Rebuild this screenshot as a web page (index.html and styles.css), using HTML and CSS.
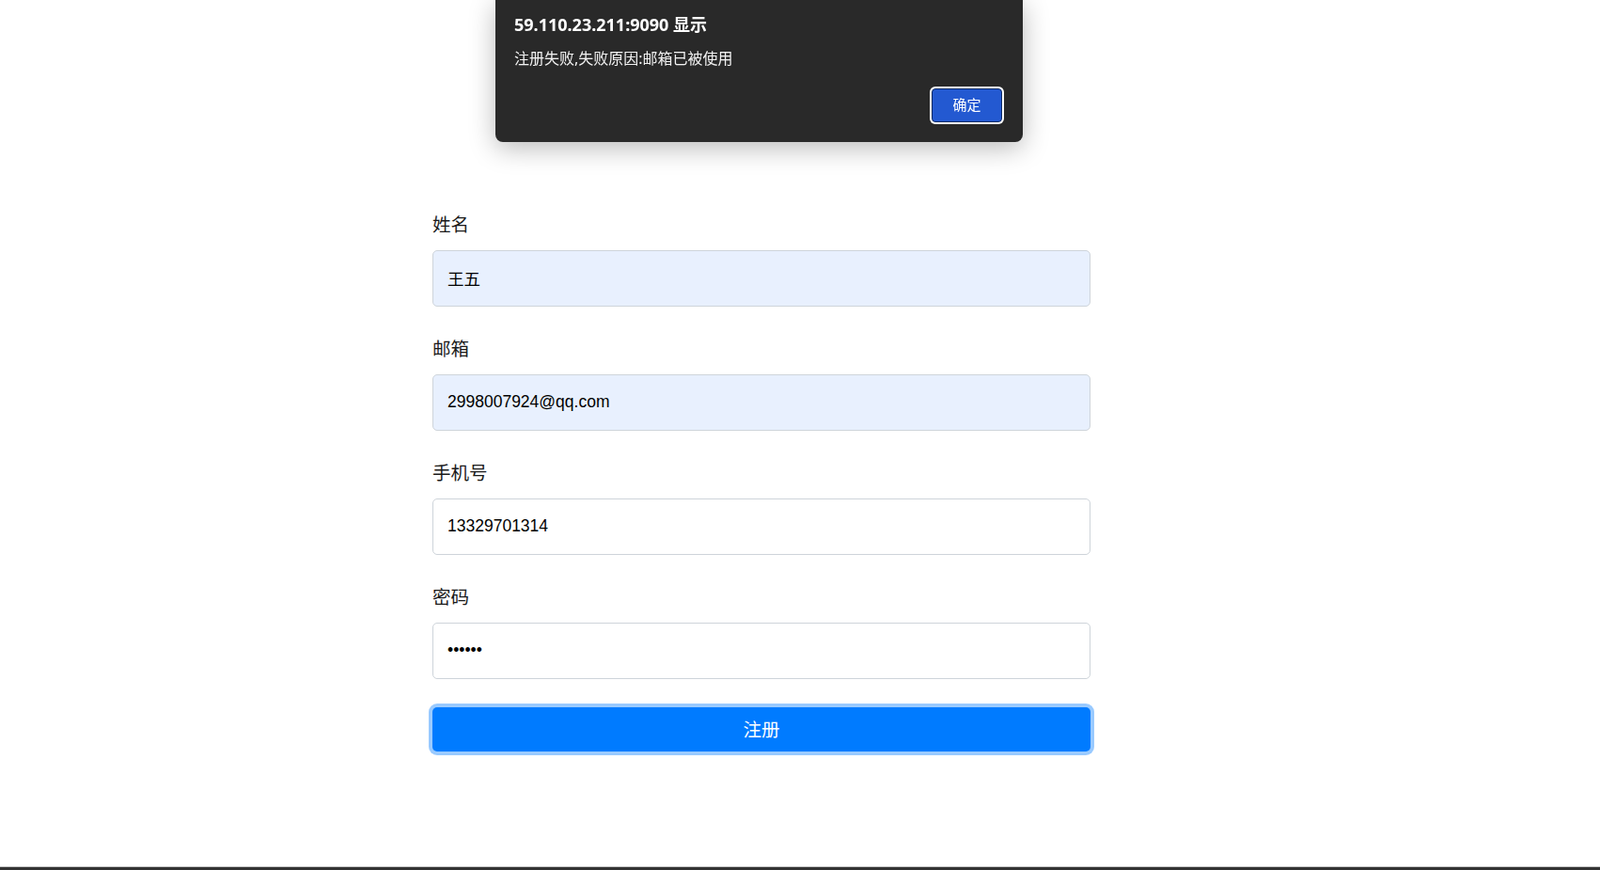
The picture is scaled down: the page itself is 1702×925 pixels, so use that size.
FILE: index.html
```html
<!DOCTYPE html>
<html lang="zh-CN">
<head>
    <meta charset="UTF-8">
    <meta name="viewport" content="width=device-width, initial-scale=1.0">
    <title>用户注册</title>
    <link rel="stylesheet" href="styles.css">
</head>
<body>
    <div class="alert-dialog">
        <div class="alert-title">59.110.23.211:9090 显示</div>
        <div class="alert-message">注册失败,失败原因:邮箱已被使用</div>
        <div class="alert-actions">
            <button class="alert-ok" type="button">确定</button>
        </div>
    </div>

    <main class="page">
        <form class="register-form" onsubmit="return false;">
            <div class="form-group">
                <label for="name">姓名</label>
                <input id="name" class="form-control autofilled" type="text" value="王五">
            </div>
            <div class="form-group">
                <label for="email">邮箱</label>
                <input id="email" class="form-control autofilled" type="email" value="2998007924@qq.com">
            </div>
            <div class="form-group">
                <label for="phone">手机号</label>
                <input id="phone" class="form-control" type="text" value="13329701314">
            </div>
            <div class="form-group">
                <label for="password">密码</label>
                <input id="password" class="form-control" type="password" value="123456">
            </div>
            <button class="btn-submit" type="submit">注册</button>
        </form>
    </main>

    <footer class="page-footer"></footer>
</body>
</html>
```

FILE: styles.css
```css
* {
    margin: 0;
    padding: 0;
    box-sizing: border-box;
}

html,
body {
    height: 100%;
}

body {
    font-family: "Noto Sans CJK SC", "Liberation Sans", sans-serif;
    background: #fff;
    color: #212529;
    display: flex;
    flex-direction: column;
}

/* browser alert box */
.alert-dialog {
    position: fixed;
    top: 0;
    left: 527px;
    width: 561px;
    padding: 14px 22px 21px 20px;
    background: #292929;
    border-radius: 0 0 8px 8px;
    box-shadow: 0 6px 28px rgba(0, 0, 0, 0.28);
    color: #fff;
    z-index: 10;
}

.alert-title {
    font-family: "Noto Sans", "Noto Sans CJK SC", sans-serif;
    font-size: 18px;
    font-weight: 700;
    line-height: 24px;
    height: 24px;
}

.alert-message {
    margin-top: 12px;
    font-family: "Noto Sans", "Noto Sans CJK SC", sans-serif;
    font-size: 16px;
    line-height: 24px;
    height: 24px;
    color: #f2f2f2;
}

.alert-actions {
    margin-top: 20px;
    display: flex;
    justify-content: flex-end;
}

.alert-ok {
    width: 75px;
    height: 36px;
    padding-bottom: 3px;
    background: #2359d1;
    color: #fff;
    border: 1px solid #0f2a63;
    border-radius: 4px;
    box-shadow: 0 0 0 2px #fff;
    font-family: "Noto Sans CJK SC", sans-serif;
    font-size: 15px;
    cursor: pointer;
}

/* form */
.page {
    flex: 1;
    padding-top: 224px;
}

.register-form {
    width: 700px;
    margin-left: 460px;
}

.form-group {
    margin-bottom: 30px;
}

.form-group label {
    display: block;
    font-family: "Noto Sans CJK SC", sans-serif;
    font-size: 19.5px;
    line-height: 28px;
    height: 28px;
    margin-bottom: 14px;
    color: #1a1a1a;
}

.form-control {
    display: block;
    width: 100%;
    height: 60px;
    padding: 0 15px 2px;
    font-family: "Liberation Sans", "Noto Sans CJK SC", sans-serif;
    font-size: 17.5px;
    color: #000;
    background: #fff;
    border: 1px solid #ced4da;
    border-radius: 5px;
    outline: none;
}

.form-control.autofilled {
    background: #e8f0fe;
}

.btn-submit {
    display: block;
    width: 100%;
    height: 47px;
    margin-top: 29px;
    padding-bottom: 3px;
    background: #007bff;
    color: #fff;
    border: none;
    border-radius: 5px;
    box-shadow: 0 0 0 4px rgba(0, 123, 255, 0.4);
    font-family: "Noto Sans CJK SC", sans-serif;
    font-size: 19.5px;
    cursor: pointer;
}

.page-footer {
    height: 4px;
    background: #333;
    border-top: 1px solid #c6c6c6;
}
```
